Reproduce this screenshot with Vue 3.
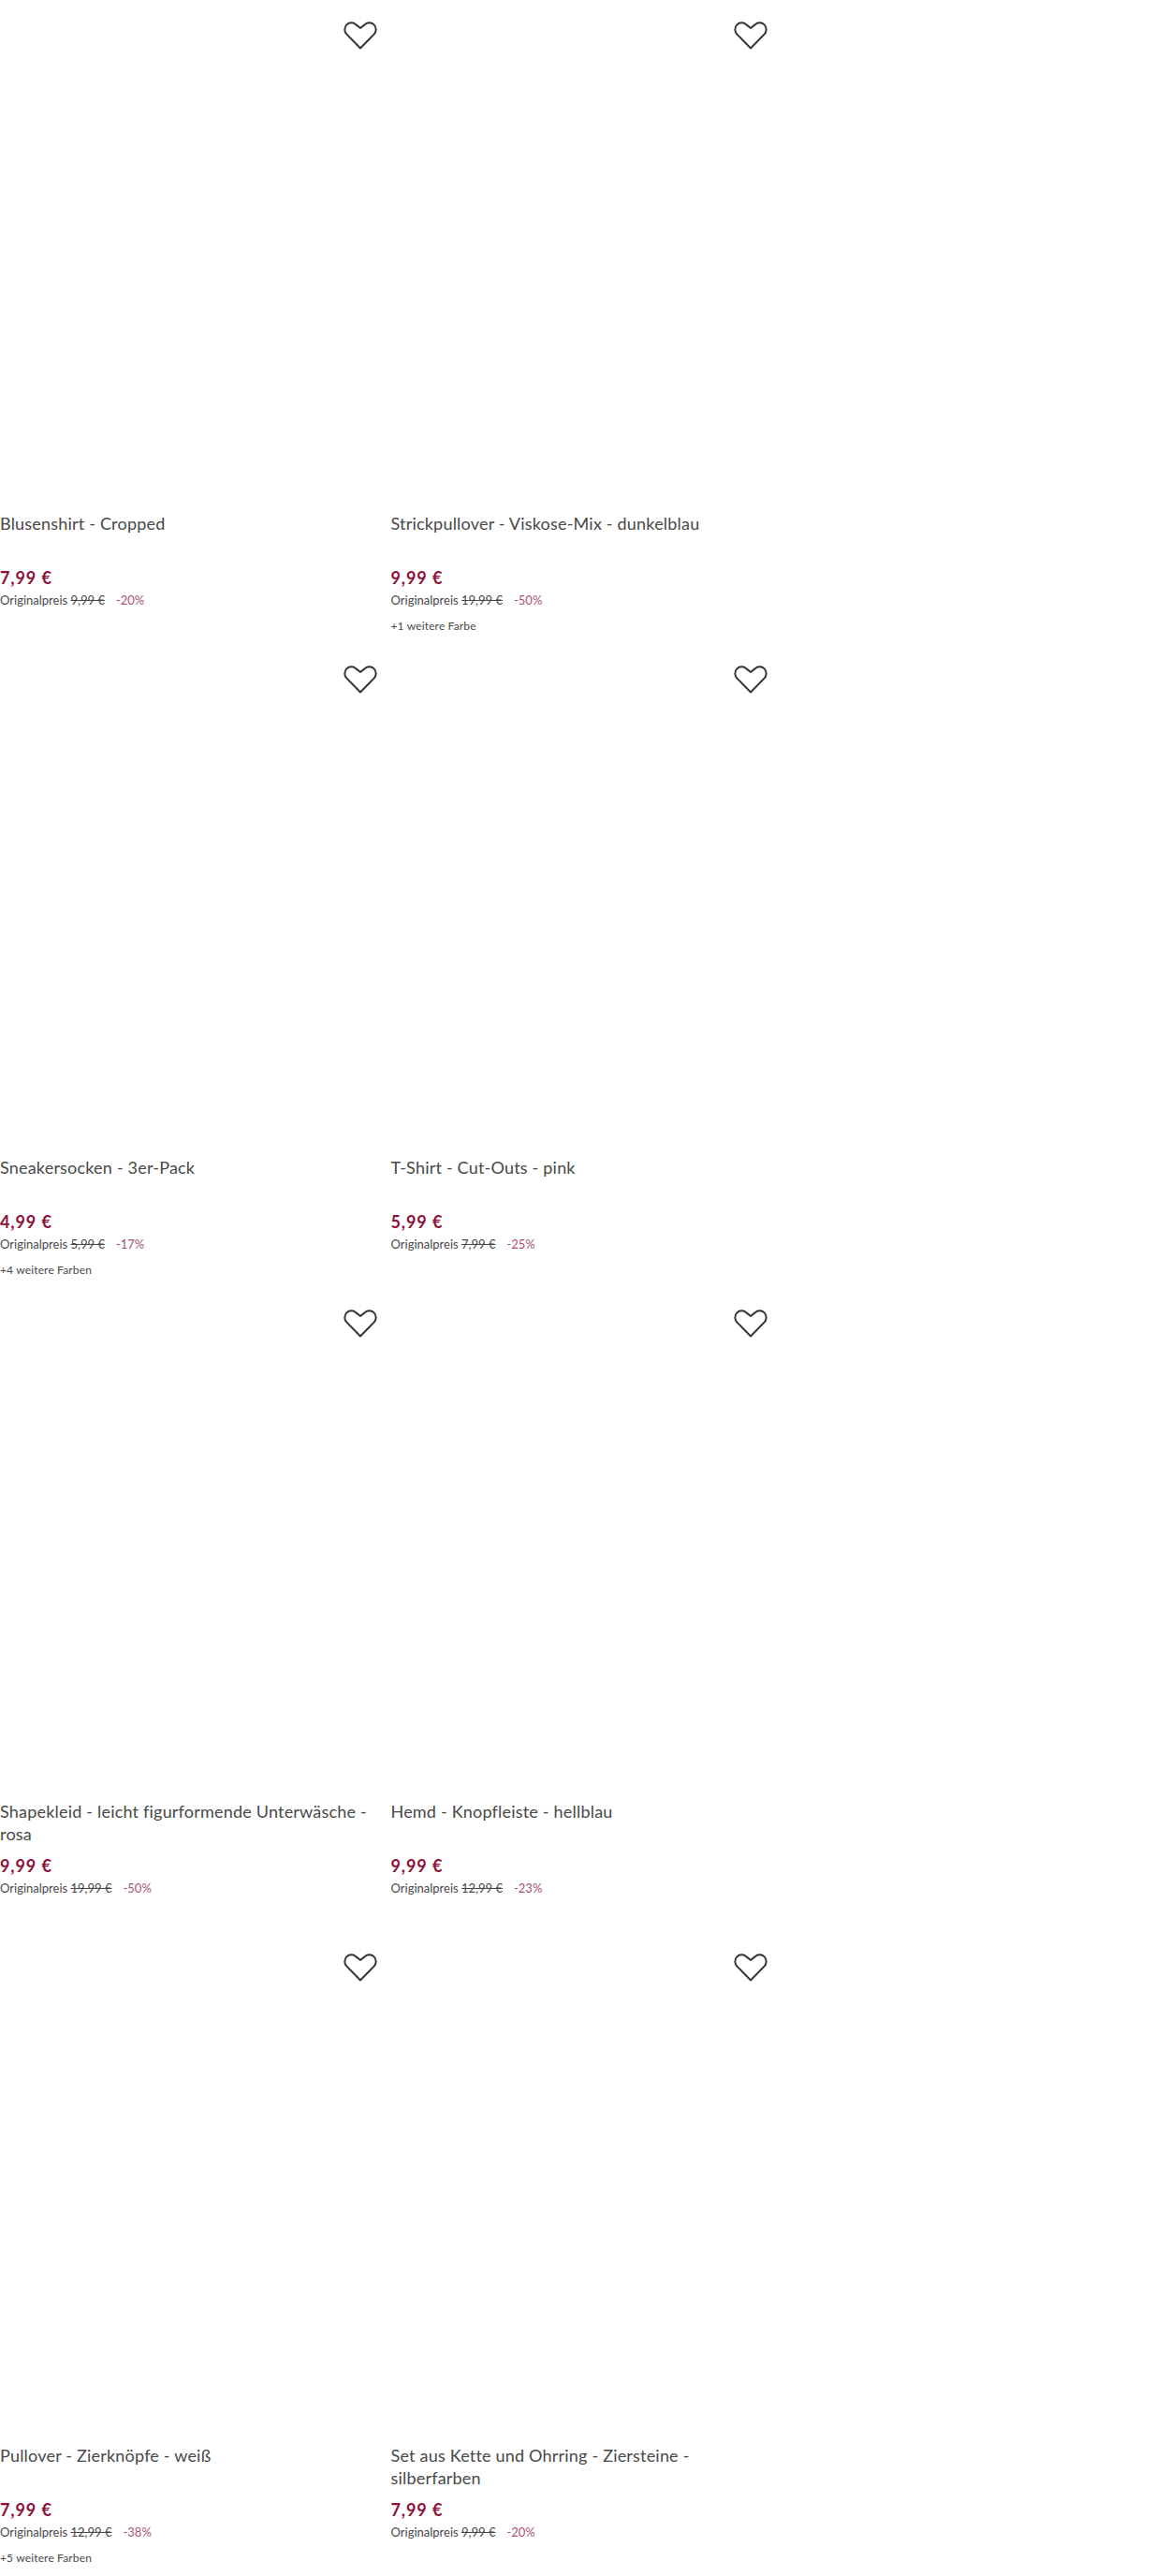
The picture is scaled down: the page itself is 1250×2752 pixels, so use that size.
<script setup>
const products = [
  { title: 'Blusenshirt - Cropped', price: '7,99 €', original: '9,99 €', discount: '-20%' },
  { title: 'Strickpullover - Viskose-Mix - dunkelblau', price: '9,99 €', original: '19,99 €', discount: '-50%', more: '+1 weitere Farbe' },
  { title: 'Sneakersocken - 3er-Pack', price: '4,99 €', original: '5,99 €', discount: '-17%', more: '+4 weitere Farben' },
  { title: 'T-Shirt - Cut-Outs - pink', price: '5,99 €', original: '7,99 €', discount: '-25%' },
  { title: 'Shapekleid - leicht figurformende Unterwäsche - rosa', price: '9,99 €', original: '19,99 €', discount: '-50%' },
  { title: 'Hemd - Knopfleiste - hellblau', price: '9,99 €', original: '12,99 €', discount: '-23%' },
  { title: 'Pullover - Zierknöpfe - weiß', price: '7,99 €', original: '12,99 €', discount: '-38%', more: '+5 weitere Farben' },
  { title: 'Set aus Kette und Ohrring - Ziersteine - silberfarben', price: '7,99 €', original: '9,99 €', discount: '-20%' },
]
</script>

<template>
  <div class="grid">
    <article v-for="p in products" :key="p.title" class="card">
      <div class="image">
        <svg class="heart" viewBox="0 0 36 31" width="36" height="31" fill="none" stroke="#333" stroke-width="2" stroke-linejoin="round">
          <path d="M18 29.5 3.4 14.6C.6 11.7.7 7.2 3.4 4.4c2.8-2.8 7.2-2.8 10 0L18 8l4.6-3.6c2.8-2.8 7.2-2.8 10 0 2.7 2.8 2.8 7.3 0 10.2L18 29.5Z" />
        </svg>
      </div>
      <h3 class="title">{{ p.title }}</h3>
      <div class="price">{{ p.price }}</div>
      <div class="original">
        Originalpreis <s>{{ p.original }}</s><span class="discount">{{ p.discount }}</span>
      </div>
      <div class="more">{{ p.more }}</div>
    </article>
  </div>
</template>

<style scoped>
.grid {
  display: grid;
  grid-template-columns: repeat(2, 417.5px);
  font-family: Lato, "Liberation Sans", sans-serif;
  color: #484848;
}

.card {
  height: 688px;
  padding-right: 18px;
  box-sizing: border-box;
}

.image {
  position: relative;
  height: 547px;
}

.heart {
  position: absolute;
  top: 22px;
  right: -3px;
}

.title {
  margin: 0;
  height: 48px;
  font-size: 18px;
  font-weight: 400;
  line-height: 24px;
  letter-spacing: 0.2px;
}

.price {
  margin-top: 10px;
  font-size: 18px;
  font-weight: 700;
  line-height: 24px;
  letter-spacing: 0.9px;
  color: #8c1239;
}

.original {
  margin-top: 4px;
  font-size: 13px;
  line-height: 16px;
}

.discount {
  margin-left: 12px;
  color: #8c1239;
  opacity: 0.75;
}

.more {
  margin-top: 12px;
  font-size: 12px;
  line-height: 16px;
  letter-spacing: 0.15px;
}
</style>
